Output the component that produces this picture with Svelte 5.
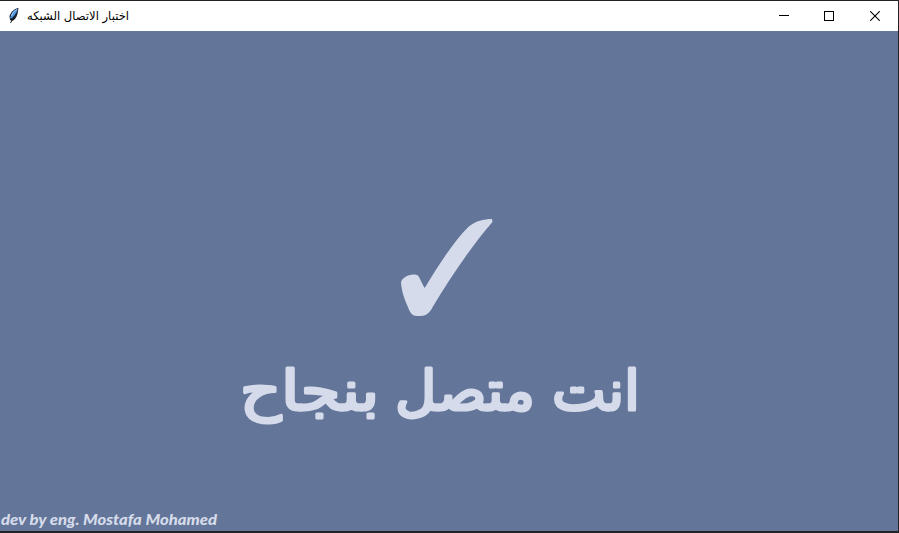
<script>
  const title = 'اختبار الاتصال الشبكه';
  const message = [
    { word: 'انت', space: 19, width: 86 },
    { word: 'متصل', space: 18, width: 138 },
    { word: 'بنجاح', space: 0, width: 137 }
  ];
  const author = 'dev by eng. Mostafa Mohamed';
</script>

<div class="window">
  <header>
    <svg class="feather" width="12" height="18" viewBox="0 0 12 18">
      <path d="M10.500 1C7 1.500 3 4.500 1.500 9L2 13l2 1c3-1 4.500-4 5.500-7Z" fill="#17202b" />
      <path d="M9.800 1.800C5 3.200 2.600 7 2.200 12c4-2 6.300-5.500 7.600-10.200Z" fill="#4f94e0" />
      <path d="M9 2.500C6.500 3.800 4.500 6 3.500 9" fill="none" stroke="#a9d2fa" />
      <path d="M6.500 9 2.500 16" fill="none" stroke="#15191f" />
    </svg>
    <svg class="title" width="110" height="30">
      <text x="103" y="19" textLength="102" lengthAdjust="spacingAndGlyphs">{title}</text>
    </svg>
    <div class="controls">
      <button class="minimize" aria-label="Minimize"><svg width="10" height="10"><path d="M0 4.500h10" /></svg></button>
      <button aria-label="Maximize"><svg width="10" height="10"><path d="M.5.5h9v9h-9z" /></svg></button>
      <button aria-label="Close"><svg class="close" width="10" height="10"><path d="m.2.200 9.600 9.600M9.800.200.200 9.800" /></svg></button>
    </div>
  </header>
  <main>
    <svg class="check" width="92" height="98" viewBox="0 0 93 98" preserveAspectRatio="none">
      <path d="M0 64C0 59 9 54 16 56C19 57 20 63 24 69C39 44 54 22 68 8C75 2 84 0 92 0L92.500 3C73 25 50 58 32 88C28 96 24 97 18 97C12 97 10 96 7 88C3 79 1 73 0 64Z" />
    </svg>
    <div class="message">
      {#each message as item}
        <svg width={item.width} height="110" style:margin-left="{item.space}px">
          <text x={item.width + 2} y="63" textLength={item.width + 2} lengthAdjust="spacingAndGlyphs">{item.word}</text>
        </svg>
      {/each}
    </div>
    <footer>
      <svg width="230" height="24"><text x="1" y="18" textLength="216" lengthAdjust="spacingAndGlyphs">{author}</text></svg>
    </footer>
  </main>
</div>

<style>
  :global(body) { margin: 0; overflow: hidden; }
  .window {
    box-sizing: border-box;
    width: 899px;
    height: 533px;
    display: flex;
    flex-direction: column;
    border: solid #222126;
    border-width: 1px 1px 2px 0;
    background: #637598;
  }
  svg { display: block; flex: none; }
  header { height: 30px; display: flex; align-items: center; background: #fff; }
  .feather { margin: -1px 0 0 8px; }
  .title { margin-left: 6px; font: 12px "DejaVu Sans", sans-serif; direction: rtl; }
  .controls { margin-left: auto; display: flex; }
  button { box-sizing: border-box; width: 46px; height: 28px; padding: 0 0 1px; border: 0; background: none; display: grid; place-items: center; }
  .minimize { padding-left: 2px; }
  button path { fill: none; stroke: #000; shape-rendering: crispEdges; }
  .close path { shape-rendering: auto; stroke-width: 1.100; }
  main { flex: 1; display: flex; flex-direction: column; align-items: flex-start; fill: #d5dbea; }
  .check { margin: 188px 0 0 401px; }
  .message {
    display: flex;
    width: 638px;
    margin-top: 30px;
    font: 55px "DejaVu Sans", sans-serif;
    direction: rtl;
    stroke: #d5dbea;
    stroke-width: 3px;
    stroke-linejoin: round;
  }
  .message svg { overflow: visible; }
  footer { margin-top: auto; font: italic 900 15px Lato, sans-serif; }
</style>
